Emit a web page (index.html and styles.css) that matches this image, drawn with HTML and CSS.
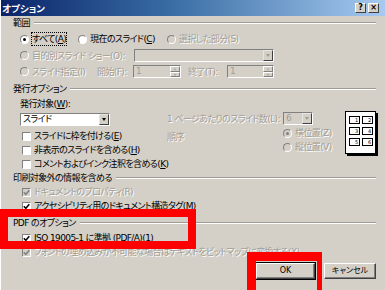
FILE: index.html
```html
<html>
<head>
<meta charset="utf-8">
<link rel="stylesheet" href="styles.css">
</head>
<body>
<div class="dialog">
  <div class="titlebar">
    <span class="title">オプション</span>
    <div class="tbtns"><span class="tbtn">?</span><span class="tbtn">×</span></div>
  </div>
  <div class="body">
    <div class="group">範囲</div>
    <div class="row r1">
      <div class="opt w58"><i class="radio on"></i><span class="focus">すべて(<u>A</u>)</span></div>
      <div class="opt w89"><i class="radio"></i><span>現在のスライド(<u>C</u>)</span></div>
      <div class="opt dis"><i class="radio"></i><span>選択した部分(S)</span></div>
    </div>
    <div class="row r2">
      <div class="opt w114 dis"><i class="radio"></i><span>目的別スライド ショー(O):</span></div>
      <div class="field off combo w140"><span></span><b class="drop"><i class="tri"></i></b></div>
    </div>
    <div class="row r3">
      <div class="opt w77 dis"><i class="radio"></i><span>スライド指定(I)</span></div>
      <span class="lbl dis w36">開始(F):</span>
      <div class="field off spin w48"><span>1</span><b class="spinbtn"><i class="up"></i><i class="dn"></i></b></div>
      <span class="lbl dis w39 ml7">終了(T):</span>
      <div class="field off spin w47"><span>1</span><b class="spinbtn"><i class="up"></i><i class="dn"></i></b></div>
    </div>

    <div class="group g2">発行オプション</div>
    <div class="publish">
      <div class="pcol">
        <div class="plabel">発行対象(<u>W</u>):</div>
        <div class="field combo sel"><span>スライド</span><b class="drop"><i class="tri"></i></b></div>
        <div class="checks">
          <div class="chk"><i class="box"></i><span>スライドに枠を付ける(<u>E</u>)</span></div>
          <div class="chk"><i class="box"></i><span>非表示のスライドを含める(<u>H</u>)</span></div>
          <div class="chk"><i class="box"></i><span>コメントおよびインク注釈を含める(<u>K</u>)</span></div>
        </div>
      </div>
      <div class="mcol dis">
        <div class="mrow">
          <span class="mlbl">1 ページあたりのスライド数(L):</span>
          <div class="field off combo w30"><span>6</span><b class="drop"><i class="tri"></i></b></div>
        </div>
        <div class="mrow order">
          <span class="mlbl">順序</span>
          <div class="radios">
            <div class="opt"><i class="radio on"></i><span>横位置(Z)</span></div>
            <div class="opt"><i class="radio"></i><span>縦位置(V)</span></div>
          </div>
        </div>
      </div>
      <div class="preview">
        <span>1</span><span>2</span><span>3</span><span>4</span><span>5</span><span>6</span>
      </div>
    </div>

    <div class="group">印刷対象外の情報を含める</div>
    <div class="chk dis"><i class="box checked"><svg viewBox="0 0 7 7"><path d="M0.8 3.2 L2.8 5.3 L6.3 1.2"/></svg></i><span>ドキュメントのプロパティ(R)</span></div>
    <div class="chk"><i class="box checked"><svg viewBox="0 0 7 7"><path d="M0.8 3.2 L2.8 5.3 L6.3 1.2"/></svg></i><span>アクセシビリティ用のドキュメント構造タグ(<u>M</u>)</span></div>

    <div class="group g4">PDF のオプション</div>
    <div class="chk"><i class="box checked"><svg viewBox="0 0 7 7"><path d="M0.8 3.2 L2.8 5.3 L6.3 1.2"/></svg></i><span>ISO 19005-1 に準拠 (PDF/A)(<u>1</u>)</span></div>
    <div class="chk dis"><i class="box checked"><svg viewBox="0 0 7 7"><path d="M0.8 3.2 L2.8 5.3 L6.3 1.2"/></svg></i><span>フォントの埋め込みが不可能な場合はテキストをビットマップに変換する(X)</span></div>

    <div class="buttons">
      <button class="btn def">OK</button>
      <button class="btn">キャンセル</button>
    </div>
  </div>
</div>
<div class="mark mark1"></div>
<div class="mark mark2"></div>
</body>
</html>
```

FILE: styles.css
```css
html, body
{
margin: 0;
}
body
{
width: 385px;
height: 290px;
overflow: hidden;
background: #d4d0c8;
font-family: "DejaVu Sans", "Noto Sans CJK JP", sans-serif;
font-size: 9px;
letter-spacing: -0.6px;
font-feature-settings: "palt";
color: #000;
position: relative;
}
u
{
text-decoration: underline;
text-underline-offset: 1px;
}
.dialog
{
height: 290px;
border-left: 1px solid #fff;
box-sizing: border-box;
}

/* title bar */
.titlebar
{
height: 16px;
display: flex;
align-items: center;
justify-content: space-between;
background: linear-gradient(to right, #0a246a, #3a6ea5 45%, #a6caf0);
}
.title
{
color: #fff;
font-family: "Noto Sans CJK JP", sans-serif;
font-weight: bold;
font-size: 9.5px;
letter-spacing: 0;
line-height: 16px;
padding-left: 1px;
}
.tbtns
{
display: flex;
gap: 2px;
margin-right: 6px;
}
.tbtn
{
width: 11px;
height: 10px;
box-sizing: border-box;
background: #d4d0c8;
border: 1px solid;
border-color: #fff #404040 #404040 #fff;
font-family: "DejaVu Sans", sans-serif;
font-weight: bold;
font-size: 8px;
letter-spacing: 0;
line-height: 8px;
text-align: center;
}

/* body */
.body
{
padding: 0 9px 0 12px;
}
.group
{
display: flex;
align-items: center;
height: 14px;
line-height: 12px;
}
.group::after
{
content: "";
flex: 1;
margin-left: 4px;
border-top: 1px solid #a09c94;
border-bottom: 1px solid #fff;
}
.g2
{
height: 18px;
}
.g4
{
height: 16px;
margin-top: 2px;
}
.row
{
display: flex;
align-items: center;
padding-left: 7px;
}
.r1
{
height: 18px;
}
.r2
{
height: 15px;
}
.r3
{
height: 17px;
}
.opt
{
display: flex;
align-items: center;
line-height: 12px;
white-space: nowrap;
}
.w58 { width: 58px; }
.w89 { width: 89px; }
.w114 { width: 114px; }
.w77 { width: 77px; }
.w36 { width: 36px; }
.w39 { width: 39px; }
.w140 { width: 140px; }
.w48 { width: 48px; }
.w47 { width: 47px; }
.w30 { width: 30px; }
.ml7 { margin-left: 7px; }
.lbl
{
white-space: nowrap;
line-height: 12px;
}
.dis, .dis u
{
color: #a19d96;
text-shadow: 1px 1px 0 #fff;
}
.focus
{
outline: 1px dotted #000;
outline-offset: 0;
}
.radio
{
width: 9px;
height: 9px;
box-sizing: border-box;
border-radius: 50%;
border: 1px solid;
border-color: #808080 #fff #fff #808080;
background: #fff;
margin-right: 3px;
position: relative;
flex: none;
}
.dis .radio
{
background: #d4d0c8;
}
.radio.on::after
{
content: "";
position: absolute;
left: 2px;
top: 2px;
width: 3px;
height: 3px;
border-radius: 50%;
background: #000;
}
.dis .radio.on::after
{
background: #808080;
}

/* fields */
.field
{
display: flex;
align-items: stretch;
height: 13px;
box-sizing: border-box;
border: 1px solid;
border-color: #808080 #fff #fff #808080;
background: #fff;
text-shadow: none;
}
.field > span
{
flex: 1;
line-height: 11px;
padding-left: 2px;
color: #000;
}
.field.off
{
background: #d4d0c8;
}
.field.off > span
{
color: #a19d96;
}
.drop, .spinbtn
{
width: 10px;
background: #d4d0c8;
box-sizing: border-box;
border: 1px solid;
border-color: #e8e6e2 #404040 #404040 #e8e6e2;
display: flex;
align-items: center;
justify-content: center;
}
.tri
{
width: 0;
height: 0;
border-left: 2.5px solid transparent;
border-right: 2.5px solid transparent;
border-top: 3px solid #000;
}
.off .tri
{
border-top-color: #a19d96;
}
.spinbtn
{
flex-direction: column;
justify-content: space-around;
border: 0;
}
.spinbtn .up, .spinbtn .dn
{
flex: 1;
width: 10px;
box-sizing: border-box;
border: 1px solid;
border-color: #fff #808080 #808080 #fff;
position: relative;
}
.spinbtn .up::after, .spinbtn .dn::after
{
content: "";
position: absolute;
left: 3px;
top: 1px;
border-left: 1.5px solid transparent;
border-right: 1.5px solid transparent;
border-bottom: 2px solid #a19d96;
}
.spinbtn .dn::after
{
border-bottom: 0;
border-top: 2px solid #a19d96;
}

/* publish options */
.publish
{
display: flex;
height: 73px;
}
.pcol
{
width: 145px;
padding-left: 7px;
}
.plabel
{
height: 12px;
line-height: 12px;
}
.sel
{
width: 90px;
margin-top: 3px;
}
.checks
{
margin-top: 3px;
}
.chk
{
display: flex;
align-items: center;
height: 14px;
line-height: 12px;
white-space: nowrap;
padding-left: 2px;
}
.body > .chk
{
padding-left: 9px;
}
.box
{
width: 9px;
height: 9px;
box-sizing: border-box;
border: 1px solid;
border-color: #808080 #fff #fff #808080;
background: #fff;
margin-right: 3px;
flex: none;
display: flex;
}
.box svg
{
width: 7px;
height: 7px;
}
.box path
{
fill: none;
stroke: #000;
stroke-width: 1.5;
}
.dis .box
{
background: #d4d0c8;
}
.dis .box path
{
stroke: #808080;
}
.mcol
{
width: 180px;
padding-left: 2px;
}
.mrow
{
display: flex;
align-items: center;
margin-top: 14px;
}
.mlbl
{
width: 116px;
line-height: 12px;
white-space: nowrap;
}
.order
{
align-items: flex-start;
margin-top: 2px;
}
.order .mlbl
{
padding-top: 4px;
}
.radios .opt
{
height: 12px;
margin-bottom: 2px;
}
.preview
{
margin-top: 13px;
width: 31px;
height: 43px;
box-sizing: border-box;
background: #fff;
border: 1px solid #000;
box-shadow: 2px 2px 0 #000;
display: grid;
grid-template-columns: 11px 11px;
grid-auto-rows: 8px;
gap: 3px 2px;
padding: 4px 0 0 3px;
}
.preview span
{
border: 1px solid #000;
font-size: 5px;
letter-spacing: 0;
line-height: 6px;
text-align: right;
padding-right: 1px;
}

/* buttons */
.buttons
{
display: flex;
justify-content: flex-end;
gap: 9px;
margin-top: 4px;
}
.btn
{
height: 16px;
width: 52px;
padding: 0;
background: #d4d0c8;
border: 1px solid;
border-color: #fff #404040 #404040 #fff;
box-shadow: inset -1px -1px 0 #808080;
font-family: "DejaVu Sans", "Noto Sans CJK JP", sans-serif;
font-size: 8px;
letter-spacing: 0;
font-feature-settings: "palt";
line-height: 12px;
color: #000;
}
.btn.def
{
width: 59px;
outline: 1px solid #000;
}

/* annotation frames */
.mark
{
position: absolute;
box-sizing: border-box;
border: 8px solid #f00;
}
.mark1
{
left: 0;
top: 209px;
width: 196px;
height: 40px;
}
.mark2
{
left: 247px;
top: 252px;
width: 75px;
height: 50px;
border-width: 9px 5px 0 9px;
}
```
